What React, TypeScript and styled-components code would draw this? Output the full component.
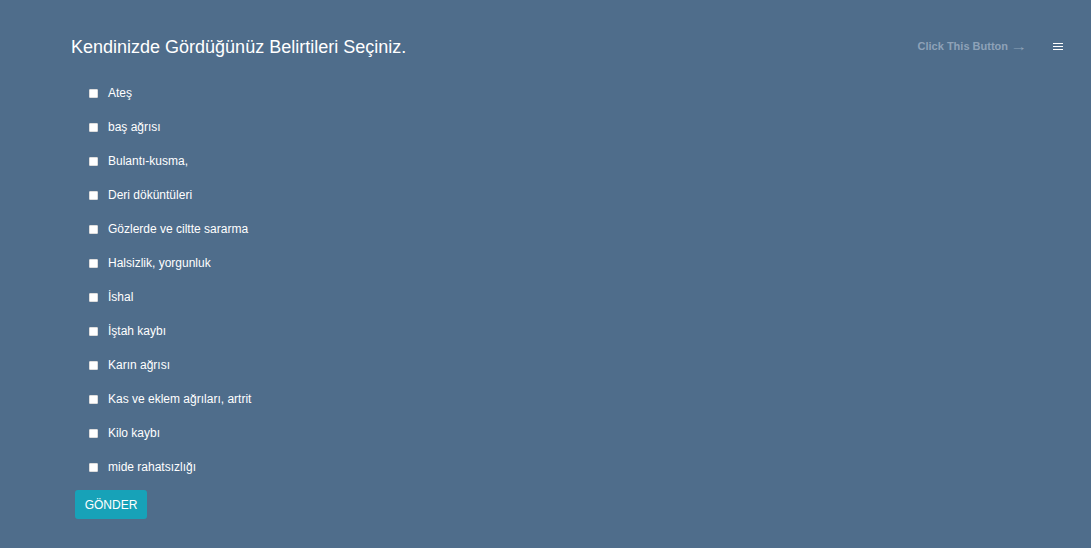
import React, { useState } from 'react';
import styled, { createGlobalStyle } from 'styled-components';

const GlobalStyle = createGlobalStyle`
  html, body {
    margin: 0;
    padding: 0;
    background-color: #4f6d8b;
    font-family: "Liberation Sans", Arial, sans-serif;
  }
`;

const Wrapper = styled.div`
  min-height: 548px;
  background-color: #4f6d8b;
  padding: 36px 28px 0 71px;
  box-sizing: border-box;
`;

const Header = styled.div`
  display: flex;
  align-items: center;
  justify-content: space-between;
`;

const Title = styled.h1`
  margin: 0;
  font-size: 18px;
  font-weight: normal;
  color: #ffffff;
  line-height: 22px;
`;

const HeaderRight = styled.div`
  display: flex;
  align-items: center;
  gap: 28px;
  margin-top: -2px;
`;

const HintText = styled.span`
  display: flex;
  align-items: center;
  gap: 4px;
  font-size: 11px;
  font-weight: bold;
  color: #8ea2b8;
`;

const Arrow = styled.span`
  font-weight: normal;
  font-size: 13px;
  transform: scaleX(1.3);
`;

const MenuButton = styled.button`
  background: none;
  border: none;
  padding: 0;
  width: 10px;
  display: flex;
  flex-direction: column;
  gap: 2px;
  cursor: pointer;
`;

const MenuLine = styled.span`
  display: block;
  height: 1px;
  width: 10px;
  background: #ffffff;
`;

const List = styled.form`
  margin-top: 18px;
  display: flex;
  flex-direction: column;
  align-items: flex-start;
`;

const Item = styled.label`
  display: flex;
  align-items: center;
  height: 34px;
  padding-left: 15px;
  font-size: 12px;
  color: #ffffff;
  cursor: pointer;
`;

const Check = styled.input`
  width: 9px;
  height: 9px;
  margin: 0 10px 0 3px;
  appearance: none;
  background: #ffffff;
  border: 1px solid #dcdcdc;
  border-radius: 1px;
  box-sizing: border-box;

  &:checked {
    background: #17a2b8;
  }
`;

const Button = styled.button`
  margin-top: 6px;
  margin-left: 4px;
  width: 72px;
  height: 29px;
  background-color: #17a2b8;
  color: #ffffff;
  border: none;
  border-radius: 3px;
  font-family: "Liberation Sans", Arial, sans-serif;
  font-size: 12px;
  cursor: pointer;
`;

const symptoms = [
  'Ateş',
  'baş ağrısı',
  'Bulantı-kusma,',
  'Deri döküntüleri',
  'Gözlerde ve ciltte sararma',
  'Halsizlik, yorgunluk',
  'İshal',
  'İştah kaybı',
  'Karın ağrısı',
  'Kas ve eklem ağrıları, artrit',
  'Kilo kaybı',
  'mide rahatsızlığı',
];

const App = () => {
  const [checked, setChecked] = useState<string[]>([]);

  const toggle = (s: string) => {
    setChecked(prev => (prev.includes(s) ? prev.filter(x => x !== s) : [...prev, s]));
  };

  return (
    <>
      <GlobalStyle />
      <Wrapper>
        <Header>
          <Title>Kendinizde Gördüğünüz Belirtileri Seçiniz.</Title>
          <HeaderRight>
            <HintText>
              Click This Button <Arrow>→</Arrow>
            </HintText>
            <MenuButton aria-label="menu">
              <MenuLine />
              <MenuLine />
              <MenuLine />
            </MenuButton>
          </HeaderRight>
        </Header>
        <List onSubmit={e => e.preventDefault()}>
          {symptoms.map(s => (
            <Item key={s}>
              <Check type="checkbox" checked={checked.includes(s)} onChange={() => toggle(s)} />
              {s}
            </Item>
          ))}
          <Button type="submit">GÖNDER</Button>
        </List>
      </Wrapper>
    </>
  );
};

export default App;
